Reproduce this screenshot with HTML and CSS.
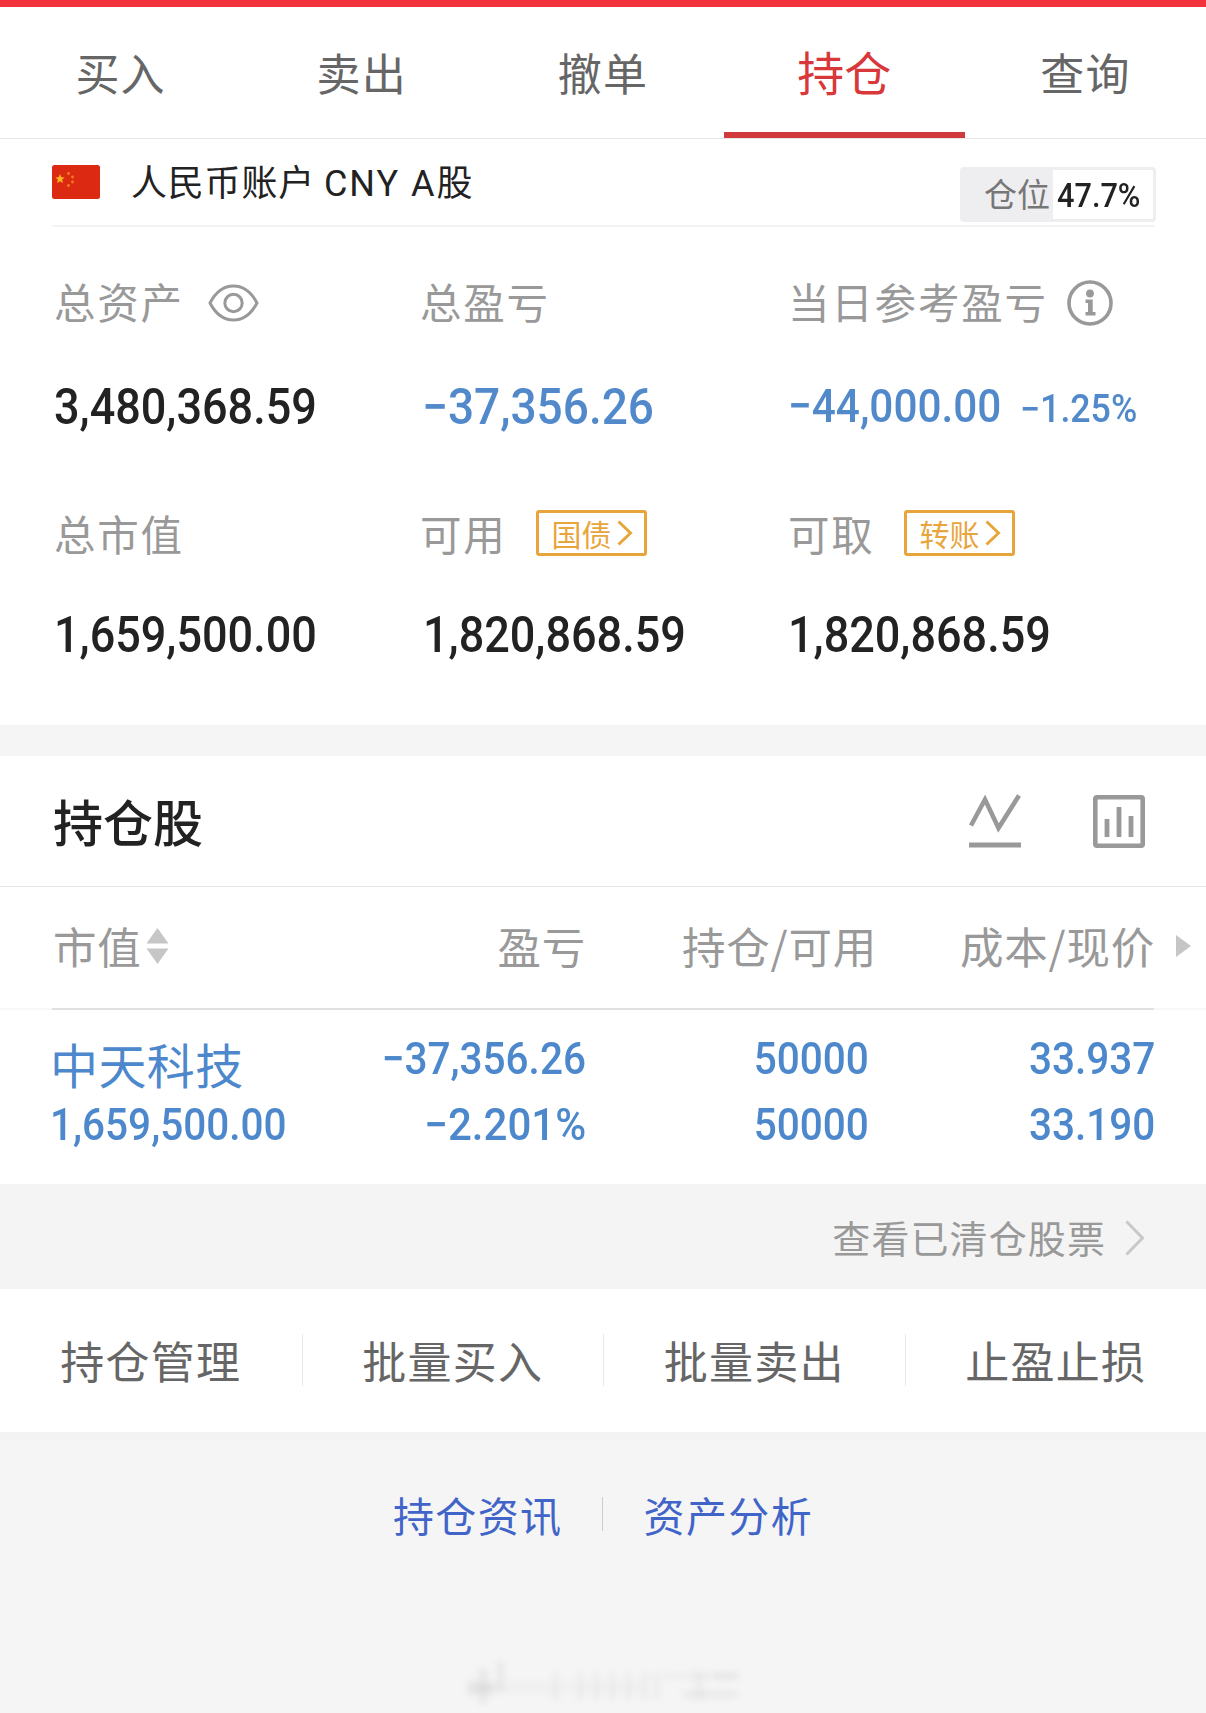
FILE: index.html
```html
<!DOCTYPE html>
<html lang="zh-CN">
<head>
<meta charset="utf-8">
<title>持仓</title>
<link rel="stylesheet" href="styles.css">
</head>
<body>
<div class="topbar"></div>
<nav class="tabs">
  <a class="tab">买入</a>
  <a class="tab">卖出</a>
  <a class="tab">撤单</a>
  <a class="tab tab-active">持仓</a>
  <a class="tab">查询</a>
</nav>

<section class="account">
  <svg class="flag" width="48" height="34" viewBox="0 0 48 34">
    <rect width="48" height="34" rx="2.5" fill="#dc2a12"/>
    <path d="M8 9l1.3 3.2 3.4.2-2.600 2.200.9 3.400L8 16.200 5 18l.9-3.400L3.300 12.400l3.400-.2z" fill="#fbb81c"/>
    <g fill="#f0801c"><circle cx="16.500" cy="8.500" r="1.400"/><circle cx="20.500" cy="12" r="1.400"/><circle cx="20.500" cy="17" r="1.400"/><circle cx="16.500" cy="20.500" r="1.400"/></g>
  </svg>
  <span class="account-name">人民币账户 <span class="latin">CNY A</span>股</span>
  <div class="position"><span class="position-label">仓位</span><span class="position-value"><span class="num">47.7%</span></span></div>
</section>

<section class="metrics">
  <div class="metric-row">
    <div class="label">总资产
      <svg class="eye" width="51" height="38" viewBox="0 0 51 38" fill="none" stroke="#999" stroke-width="3"><path d="M2 19C8 7.500 16 2 25.500 2S43 7.500 49 19C43 30.500 35 36 25.500 36S8 30.500 2 19z"/><circle cx="25.500" cy="19" r="8.700"/></svg>
    </div>
    <div class="label">总盈亏</div>
    <div class="label">当日参考盈亏
      <svg class="info" width="46" height="46" viewBox="0 0 46 46"><circle cx="23" cy="23" r="21" fill="none" stroke="#999" stroke-width="3.600"/><circle cx="23" cy="13.500" r="3.900" fill="#999"/><path d="M18.500 19.500h7.200v12.500H28.500v3.500h-10v-3.500h2.500v-9H18.500z" fill="#999"/></svg>
    </div>
  </div>
  <div class="metric-row values">
    <div><span class="num big">3,480,368.59</span></div>
    <div><span class="num big blue loss">−37,356.26</span></div>
    <div class="today"><span class="num mid blue">−44,000.00</span><span class="num small blue">−1.25%</span></div>
  </div>
  <div class="metric-row second">
    <div class="label">总市值</div>
    <div class="label">可用
      <a class="tag">国债<svg width="16" height="26" viewBox="0 0 16 26" fill="none" stroke="#e8a53c" stroke-width="3"><path d="M1.500 1.500L13.500 13 1.500 24.500"/></svg></a>
    </div>
    <div class="label">可取
      <a class="tag">转账<svg width="16" height="26" viewBox="0 0 16 26" fill="none" stroke="#e8a53c" stroke-width="3"><path d="M1.500 1.500L13.500 13 1.500 24.500"/></svg></a>
    </div>
  </div>
  <div class="metric-row values">
    <div><span class="num big">1,659,500.00</span></div>
    <div class="available"><span class="num big">1,820,868.59</span></div>
    <div><span class="num big">1,820,868.59</span></div>
  </div>
</section>

<section class="holdings">
  <header class="holdings-head">
    <h2>持仓股</h2>
    <svg width="54" height="54" viewBox="0 0 54 54" fill="none" stroke="#999"><path d="M3 31.500L17 5.500 30.500 34 51 1.500" stroke-width="4.600"/><path d="M1 51h52" stroke-width="5"/></svg>
    <svg width="52" height="53" viewBox="0 0 52 53" fill="none" stroke="#999"><rect x="2.300" y="2.300" width="47.400" height="48.400" rx="1.500" stroke-width="4.600"/><path d="M14 24v18M26 12v30M38 21v21" stroke-width="4.800"/></svg>
  </header>
  <div class="columns thead">
    <div class="th">市值<svg width="23" height="38" viewBox="0 0 23 38" fill="#c6c6c6"><path d="M11.500 1L22.500 16.500H.5zM.5 21.500h22L11.500 37z"/></svg></div>
    <div class="th">盈亏</div>
    <div class="th">持仓/可用</div>
    <div class="th">成本/现价</div>
    <svg class="more" width="15" height="22" viewBox="0 0 15 22" fill="#c6c6c6"><path d="M0 0l15 11L0 22z"/></svg>
  </div>
  <div class="rule"></div>
  <div class="columns stock">
    <div class="stock-first"><div class="stock-name">中天科技</div><div class="line"><span class="num">1,659,500.00</span></div></div>
    <div><div class="line"><span class="num">−37,356.26</span></div><div class="line"><span class="num percent">−2.201%</span></div></div>
    <div class="amount"><div class="line"><span class="num">50000</span></div><div class="line"><span class="num">50000</span></div></div>
    <div class="price"><div class="line"><span class="num">33.937</span></div><div class="line"><span class="num">33.190</span></div></div>
  </div>
</section>

<a class="cleared">查看已清仓股票<svg width="20" height="36" viewBox="0 0 20 36" fill="none" stroke="#c8c8c8" stroke-width="3"><path d="M1.500 1.500L17.500 18 1.500 34.500"/></svg></a>

<nav class="actions">
  <a>持仓管理</a><a>批量买入</a><a>批量卖出</a><a>止盈止损</a>
</nav>

<footer class="links">
  <a>持仓资讯</a><i></i><a>资产分析</a>
</footer>
<svg class="smudge" width="290" height="56" viewBox="0 0 290 56">
  <g fill="#d2d2d2">
    <rect x="10" y="27" width="26" height="12" opacity=".5"/><rect x="20" y="14" width="10" height="34" opacity=".3"/><rect x="39" y="6" width="7" height="31" opacity=".35"/><rect x="36" y="27" width="150" height="10" opacity=".14"/>
    <g opacity=".2"><rect x="94" y="18" width="7" height="27"/><rect x="119" y="18" width="7" height="27"/><rect x="135" y="18" width="7" height="27"/><rect x="151" y="18" width="7" height="27"/><rect x="167" y="18" width="7" height="27"/><rect x="183" y="18" width="7" height="27"/><rect x="195" y="18" width="7" height="27"/><rect x="236" y="16" width="10" height="30"/></g>
    <rect x="205" y="18" width="75" height="6" opacity=".22"/><rect x="256" y="18" width="23" height="6" opacity=".35"/><rect x="225" y="36" width="54" height="7" opacity=".3"/>
  </g>
</svg>
</body>
</html>
```
FILE: styles.css
```css
* { box-sizing: border-box; }
body {
  margin: 0;
  width: 1206px;
  height: 1713px;
  overflow: hidden;
  background: #f5f5f5;
  font-family: "Noto Sans CJK SC", sans-serif;
  color: #222;
}
svg { display: block; flex: none; }
.topbar { height: 7px; background: #f2323c; }

.tabs {
  display: grid;
  grid-template-columns: repeat(5, 1fr);
  grid-template-rows: 131px;
  height: 132px;
  background: #fff;
  border-bottom: 1px solid #e8e8e8;
}
.tab {
  display: flex;
  justify-content: center;
  line-height: 131px;
  font-size: 44px;
  letter-spacing: 1.200px;
  color: #666;
}
.tab-active {
  font-size: 47px;
  line-height: 127px;
  letter-spacing: 0;
  color: #d9383a;
  border-bottom: 6px solid #d03a3c;
}

.account {
  display: flex;
  height: 88px;
  padding: 0 50px 0 52px;
  background: linear-gradient(#f3f3f3, #f3f3f3) 52px 100% / 1103px 2px no-repeat #fff;
}
.flag { margin-top: 26px; }
.account-name {
  margin-left: 31px;
  font-size: 36px;
  line-height: 83px;
  letter-spacing: .8px;
}
.latin { font-family: Roboto, sans-serif; letter-spacing: 2px; }
.position {
  display: flex;
  width: 196px;
  height: 55px;
  margin: 28px 0 0 auto;
  border: 3px solid #eeeef0;
  border-radius: 4px;
}
.position-label {
  width: 90px;
  padding-left: 21px;
  background: #eeeef0;
  font-size: 33px;
  line-height: 47px;
  color: #777;
}
.position-value { padding-left: 4px; font-size: 33px; line-height: 46px; }

.num {
  display: inline-block;
  font-family: Roboto, sans-serif;
  font-weight: 500;
  transform: scaleX(.9);
  transform-origin: left center;
  white-space: nowrap;
}
.position .num { transform: scaleX(.93); }
.blue { color: #5189ca; }

.metrics { height: 498px; padding: 44px 0 0 54px; background: #fff; }
.metric-row {
  display: grid;
  grid-template-columns: 366px 368px 1fr;
  height: 60px;
}
.values { margin-top: 46px; line-height: 61px; }
.second { margin-top: 66px; }
.second + .values { margin-top: 42px; }
.label {
  display: flex;
  align-items: center;
  font-size: 41.500px;
  line-height: 60px;
  letter-spacing: 1.800px;
  color: #999;
}
.eye { margin: 3px 0 0 24px; }
.info { margin: 3px 0 0 19px; }
.big { font-size: 50px; }
.loss { margin-left: 2px; transform: scaleX(.92); }
.available { padding-left: 3px; }
.mid { font-size: 47px; transform: scaleX(.9); }
.small { font-size: 38px; margin-left: -5px; transform: scaleX(.94); }
.today { display: flex; align-items: baseline; line-height: 57px; }
.tag {
  display: flex;
  align-items: center;
  gap: 5px;
  width: 111px;
  height: 46px;
  margin: 0 0 0 29px;
  padding-left: 13px;
  border: 3px solid #e8a53c;
  border-radius: 3px;
  font-size: 30px;
  letter-spacing: 0;
  line-height: 34px;
  color: #e8a53c;
}

.holdings { margin-top: 31px; height: 428px; background: #fff; }
.holdings-head {
  display: flex;
  align-items: center;
  height: 131px;
  padding: 0 61px 0 53px;
  border-bottom: 1px solid #e8e8e8;
}
h2 { margin: 0 auto 3px 0; font-size: 50px; font-weight: 500; line-height: 70px; }
.holdings-head svg + svg { margin-left: 71px; }
.columns {
  display: grid;
  grid-template-columns: 247px 286px 291px 278px 1fr;
  padding-left: 53px;
}
.thead { height: 121px; align-items: center; }
.th {
  display: flex;
  align-items: center;
  justify-content: flex-end;
  padding-bottom: 3px;
  font-size: 43.500px;
  line-height: 60px;
  letter-spacing: .8px;
  white-space: nowrap;
  color: #999;
}
.th:first-child { justify-content: flex-start; }
.th svg { margin: 0 0 0 4px; }
.more { margin: -3px 0 0 21px; }
.rule {
  height: 2px;
  background: linear-gradient(#e0e0e0, #e0e0e0) 52px 0 / 1102px 2px no-repeat #f8f8f8;
}
.stock { padding-top: 12px; color: #4d88cc; font-size: 45px; text-align: right; }
.stock .num { transform-origin: right center; }
.stock .percent { transform: scaleX(.935); }
.amount { padding-right: 8px; }
.stock .price .num { transform: scaleX(.9); }
.price { padding-right: 0; }
.stock .stock-first { margin-left: -3px; text-align: left; }
.stock .stock-first .num { transform-origin: left center; }
.line { height: 66px; line-height: 66px; }
.stock-name { height: 66px; font-size: 48px; letter-spacing: .4px; line-height: 82px; white-space: nowrap; }

.cleared {
  display: flex;
  align-items: center;
  justify-content: flex-end;
  height: 105px;
  padding-right: 61px;
  background: #f4f4f4;
  font-size: 38px;
  line-height: 100px;
  letter-spacing: 1.100px;
  color: #999;
}
.cleared svg { margin: 2px 0 0 19px; }
.actions {
  display: grid;
  grid-template-columns: repeat(4, 1fr);
  align-items: center;
  height: 143px;
  padding-bottom: 2px;
  background: #fff;
}
.actions a {
  height: 52px;
  line-height: 52px;
  text-align: center;
  font-size: 44px;
  letter-spacing: 1.300px;
  color: #666;
}
.actions a + a { border-left: 1px solid #e8e8e8; }
.links {
  display: flex;
  justify-content: center;
  align-items: center;
  height: 164px;
  padding-bottom: 9px;
  border-top: 8px solid #f3f3f3;
  font-size: 41px;
  line-height: 60px;
  letter-spacing: 1.400px;
  color: #4164c8;
}
.links i { width: 1px; height: 34px; margin: 0 41px 0 39px; background: #ccc; }
.smudge { margin: 59px 0 0 458px; filter: blur(3px); }
```
